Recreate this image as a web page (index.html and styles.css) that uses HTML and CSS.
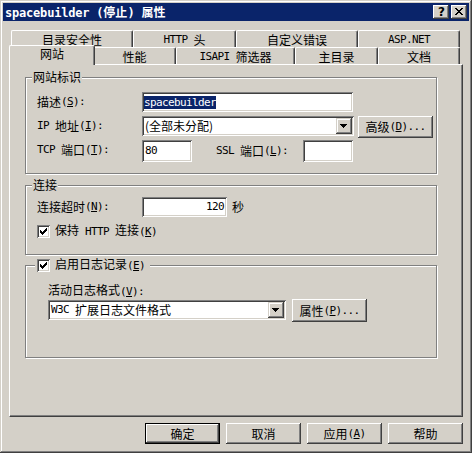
FILE: index.html
```html
<!DOCTYPE html>
<html lang="zh-CN">
<head>
<meta charset="utf-8">
<title>spacebuilder (停止) 属性</title>
<link rel="stylesheet" href="styles.css">
</head>
<body>
<div class="win">
  <div class="title">
    <div class="title-text"><span class="ab">spacebuilder (</span>停止<span class="ab">) </span>属性</div>
    <div class="tbtn help">?</div>
    <div class="tbtn close"><svg width="8" height="7" viewBox="0 0 8 7" shape-rendering="crispEdges"><path d="M0 0h2v1h-2z M6 0h2v1h-2z M1 1h2v1h-2z M5 1h2v1h-2z M2 2h4v1h-4z M3 3h2v1h-2z M2 4h4v1h-4z M1 5h2v1h-2z M5 5h2v1h-2z M0 6h2v1h-2z M6 6h2v1h-2z"/></svg></div>
  </div>
  <div class="client">
    <div class="tabrow">
      <div class="tab w122">目录安全性</div>
      <div class="tab w103"><span class="a">HTTP </span>头</div>
      <div class="tab w122">自定义错误</div>
      <div class="tab w102"><span class="a">ASP.NET</span></div>
    </div>
    <div class="tabrow">
      <div class="tab sel w86">网站</div>
      <div class="tab w83">性能</div>
      <div class="tab w119"><span class="a">ISAPI </span>筛选器</div>
      <div class="tab w83">主目录</div>
      <div class="tab w82">文档</div>
    </div>
    <div class="page">
      <div class="group g1">
        <div class="cap">网站标识</div>
        <div class="row r-desc">
          <div class="lbl">描述<span class="a">(<u>S</u>):</span></div>
          <div class="edit e-desc"><span class="hl a">spacebuilder</span></div>
        </div>
        <div class="row r-ip">
          <div class="lbl"><span class="a">IP </span>地址<span class="a">(<u>I</u>):</span></div>
          <div class="combo c-ip">
            <div class="combo-text">(全部未分配)</div>
            <div class="dd"><svg width="7" height="4" viewBox="0 0 7 4" shape-rendering="crispEdges"><path d="M0 0h7v1h-7z M1 1h5v1h-5z M2 2h3v1h-3z M3 3h1v1h-1z"/></svg></div>
          </div>
          <div class="btn b-adv">高级<span class="a">(<u>D</u>)...</span></div>
        </div>
        <div class="row r-tcp">
          <div class="lbl"><span class="a">TCP </span>端口<span class="a">(<u>T</u>):</span></div>
          <div class="edit e-port"><span class="a">80</span></div>
          <div class="lbl lbl-ssl"><span class="a">SSL </span>端口<span class="a">(<u>L</u>):</span></div>
          <div class="edit e-port"></div>
        </div>
      </div>
      <div class="group g2">
        <div class="cap">连接</div>
        <div class="row r-timeout">
          <div class="lbl">连接超时<span class="a">(<u>N</u>):</span></div>
          <div class="edit e-timeout"><span class="a">120</span></div>
          <div class="lbl unit">秒</div>
        </div>
        <div class="row r-keep">
          <div class="chk"><svg width="7" height="7" viewBox="0 0 7 7" shape-rendering="crispEdges"><path d="M6 0h1v1h-1z M5 1h2v1h-2z M0 2h1v1h-1z M4 2h3v1h-3z M0 3h2v1h-2z M3 3h3v1h-3z M0 4h5v1h-5z M1 5h3v1h-3z M2 6h1v1h-1z"/></svg></div>
          <div class="chk-text">保持<span class="a"> HTTP </span>连接<span class="a">(<u>K</u>)</span></div>
        </div>
      </div>
      <div class="group g3">
        <div class="cap cap-chk">
          <div class="chk"><svg width="7" height="7" viewBox="0 0 7 7" shape-rendering="crispEdges"><path d="M6 0h1v1h-1z M5 1h2v1h-2z M0 2h1v1h-1z M4 2h3v1h-3z M0 3h2v1h-2z M3 3h3v1h-3z M0 4h5v1h-5z M1 5h3v1h-3z M2 6h1v1h-1z"/></svg></div>
          <div class="chk-text">启用日志记录<span class="a">(<u>E</u>)</span></div>
        </div>
        <div class="logsec">
          <div class="loglbl">活动日志格式<span class="a">(<u>V</u>):</span></div>
          <div class="row r-log">
            <div class="combo c-log">
              <div class="combo-text"><span class="a">W3C </span>扩展日志文件格式</div>
              <div class="dd"><svg width="7" height="4" viewBox="0 0 7 4" shape-rendering="crispEdges"><path d="M0 0h7v1h-7z M1 1h5v1h-5z M2 2h3v1h-3z M3 3h1v1h-1z"/></svg></div>
            </div>
            <div class="btn b-prop">属性<span class="a">(<u>P</u>)...</span></div>
          </div>
        </div>
      </div>
    </div>
    <div class="btns">
      <div class="btn def">确定</div>
      <div class="btn">取消</div>
      <div class="btn">应用<span class="a">(<u>A</u>)</span></div>
      <div class="btn">帮助</div>
    </div>
  </div>
</div>
</body>
</html>
```
FILE: styles.css
```css
* { box-sizing: border-box; }
body {
  margin: 0;
  background: #d4d0c8;
  font-family: "Noto Sans CJK SC", "Noto Sans", sans-serif;
  font-size: 12px;
  line-height: 14px;
  color: #000;
}
.a {
  font-family: "DejaVu Sans Mono", "Liberation Mono", "Noto Sans CJK SC", monospace;
  font-size: 11px;
  letter-spacing: -0.62px;
}
.ab {
  font-family: "DejaVu Sans Mono", "Liberation Mono", "Noto Sans CJK SC", monospace;
  font-size: 12px;
  letter-spacing: -0.2px;
  font-weight: bold;
}
u { text-underline-offset: 1px; }

.win {
  width: 472px;
  height: 453px;
  padding: 3px;
  background: #d4d0c8;
  box-shadow: inset -1px -1px #404040, inset 1px 1px #d4d0c8, inset -2px -2px #808080, inset 2px 2px #fff;
  display: flex;
  flex-direction: column;
}
.title {
  height: 18px;
  background: #0a246a;
  color: #fff;
  font-weight: bold;
  display: flex;
  align-items: center;
  padding: 0 2px;
}
.title-text { flex: 1; white-space: pre; }
.tbtn {
  width: 16px;
  height: 14px;
  background: #d4d0c8;
  color: #000;
  box-shadow: inset -1px -1px #404040, inset 1px 1px #fff, inset -2px -2px #808080, inset 2px 2px #d4d0c8;
}
.help {
  margin-right: 2px;
  font-family: "DejaVu Sans", sans-serif;
  font-weight: bold;
  font-size: 12px;
  line-height: 14px;
  text-align: center;
  padding-left: 1px;
}
.close { padding: 3px 0 0 4px; }
.close svg { display: block; }

.client {
  flex: 1;
  padding: 9px 6px 0 6px;
}
.tabrow {
  display: flex;
  height: 17px;
  margin-left: 2px;
  align-items: flex-start;
}
.tab {
  flex: none;
  height: 17px;
  background: #d4d0c8;
  border-top: 1px solid #fff;
  border-left: 1px solid #fff;
  border-right: 1px solid #404040;
  box-shadow: inset -1px 0 #808080;
  border-radius: 2px 2px 0 0;
  display: flex;
  justify-content: center;
  align-items: center;
  padding-top: 2px;
  line-height: 12px;
  white-space: pre;
}
.tab.sel {
  height: 20px;
  margin: -2px -2px 0 -2px;
  padding-top: 1px;
  padding-bottom: 4px;
  position: relative;
  z-index: 1;
}
.w82 { width: 82px; }
.w83 { width: 83px; }
.w86 { width: 86px; }
.w102 { width: 102px; }
.w103 { width: 103px; }
.w119 { width: 119px; }
.w122 { width: 122px; }

.page {
  width: 454px;
  height: 353px;
  border-top: 1px solid #fff;
  border-left: 1px solid #fff;
  border-right: 1px solid #404040;
  border-bottom: 1px solid #404040;
  box-shadow: inset -1px -1px #808080;
  padding: 12px 0 0 15px;
}
.group {
  width: 412px;
  border: 1px solid #808080;
  box-shadow: inset 1px 1px #fff, 1px 1px #fff;
  padding-left: 11px;
}
.g1 { height: 97px; }
.g2 { height: 70px; margin-top: 11px; }
.g3 { height: 93px; margin-top: 10px; }
.cap {
  display: flex;
  align-items: center;
  width: fit-content;
  height: 14px;
  margin: -8px 0 -6px -5px;
  padding: 0 1px;
  background: #d4d0c8;
  white-space: pre;
}
.cap-chk {
  margin-left: -2px;
  padding: 0 5px 0 2px;
}
.row {
  display: flex;
  align-items: flex-start;
}
.lbl {
  width: 105px;
  height: 20px;
  display: flex;
  align-items: center;
  white-space: pre;
  flex: none;
}
.r-desc { margin-top: 14px; }
.r-ip { margin-top: 4px; }
.r-tcp { margin-top: 2px; }
.r-timeout { margin-top: 11px; }
.r-keep { margin-top: 6px; align-items: center; }

.edit {
  flex: none;
  height: 20px;
  background: #fff;
  box-shadow: inset 1px 1px #808080, inset -1px -1px #fff, inset 2px 2px #404040, inset -2px -2px #d4d0c8;
  padding: 2px 2px 2px 2px;
  display: flex;
  align-items: center;
  white-space: pre;
}
.e-desc { width: 211px; }
.hl {
  background: #0a246a;
  color: #fff;
  line-height: 13px;
}
.e-port { width: 50px; height: 22px; padding-left: 3px; }
.lbl-ssl { width: 87px; margin-left: 24px; height: 22px; }
.e-timeout { width: 85px; justify-content: flex-end; padding-right: 3px; }
.unit { width: auto; margin-left: 5px; }

.combo {
  flex: none;
  height: 20px;
  background: #fff;
  box-shadow: inset 1px 1px #808080, inset -1px -1px #fff, inset 2px 2px #404040, inset -2px -2px #d4d0c8;
  padding: 2px;
  display: flex;
}
.combo-text {
  flex: 1;
  display: flex;
  align-items: center;
  padding-left: 1px;
  white-space: pre;
}
.c-ip { width: 212px; }
.c-log { width: 238px; margin-top: 1px; }
.dd {
  width: 16px;
  height: 16px;
  background: #d4d0c8;
  box-shadow: inset -1px -1px #404040, inset 1px 1px #d4d0c8, inset -2px -2px #808080, inset 2px 2px #fff;
  padding: 6px 0 0 4px;
}
.dd svg { display: block; }

.btn {
  flex: none;
  width: 75px;
  height: 21px;
  background: #d4d0c8;
  box-shadow: inset -1px -1px #404040, inset 1px 1px #fff, inset -2px -2px #808080, inset 2px 2px #d4d0c8;
  display: flex;
  align-items: center;
  justify-content: center;
  white-space: pre;
}
.btn.def {
  border: 1px solid #000;
}
.b-adv { height: 22px; margin-left: 4px; }
.b-prop { height: 23px; margin-left: 6px; }

.chk {
  flex: none;
  width: 13px;
  height: 13px;
  background: #fff;
  box-shadow: inset 1px 1px #808080, inset -1px -1px #fff, inset 2px 2px #404040, inset -2px -2px #d4d0c8;
  padding: 3px 0 0 3px;
}
.chk svg { display: block; }
.chk-text { margin-left: 5px; white-space: pre; }

.logsec { margin-left: 11px; }
.loglbl {
  margin-top: 16px;
  height: 16px;
  line-height: 16px;
  white-space: pre;
}
.r-log { margin-top: 1px; }

.btns {
  display: flex;
  justify-content: flex-end;
  gap: 6px;
  margin-top: 6px;
}
```
